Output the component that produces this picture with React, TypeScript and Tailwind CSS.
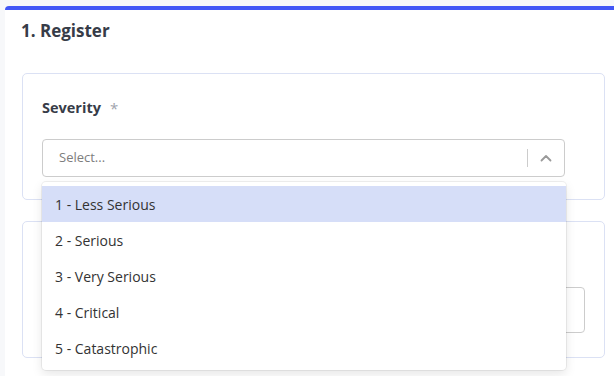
import React from "react";

const options = [
  "1 - Less Serious",
  "2 - Serious",
  "3 - Very Serious",
  "4 - Critical",
  "5 - Catastrophic",
];

export default function App() {
  return (
    <div
      className="h-screen bg-[#f7f8fa] pl-[5px] pt-[6px] overflow-hidden"
      style={{ fontFamily: '"Open Sans", "Noto Sans", sans-serif' }}
    >
      <div className="bg-white border-t-4 border-[#4257f6] rounded-tl-[4px] h-full">
        <div className="pl-[16px] pt-[8px]">
          <h2 className="text-[17px] leading-[26px] font-bold text-[#373c48]">1. Register</h2>
        </div>
        <div className="pl-[17px] pr-[9px] pt-[29px] flex flex-col gap-[21px]">
          <div className="relative z-10 h-[127px] border border-[#dbe1f4] rounded-[5px] px-[19px] pt-[24px]">
            <div className="flex items-center h-[20px]">
              <span className="text-[14.5px] font-bold text-[#373c48]">Severity</span>
              <span className="ml-[9px] text-[15px] text-[#a0a4ad]">*</span>
            </div>
            <div className="relative mt-[21px] w-[523px]">
              <div className="h-[38px] border border-[#cccccc] rounded-[4px] flex items-center bg-white">
                <span className="flex-1 pl-[16px] text-[13px] text-[#7d7d7d]">Select...</span>
                <span className="w-px h-[18px] bg-[#cccccc]" />
                <span className="w-[36px] flex items-center justify-center">
                  <svg width="12" height="8" viewBox="0 0 12 8" fill="none">
                    <path d="M1.5 6.5 L6 2 L10.5 6.5" stroke="#9a9a9a" strokeWidth="1.8" strokeLinecap="round" strokeLinejoin="round" />
                  </svg>
                </span>
              </div>
              <div className="absolute left-0 top-[43px] w-[524px] bg-white rounded-[4px] py-[4px] shadow-[0_0_0_1px_rgba(0,0,0,0.06),0_4px_11px_rgba(0,0,0,0.1)]">
                {options.map((o, i) => (
                  <div
                    key={o}
                    className={
                      "h-[36px] flex items-center pl-[13px] text-[14px] text-[#333333] " +
                      (i === 0 ? "bg-[#d6def8]" : "")
                    }
                  >
                    {o}
                  </div>
                ))}
              </div>
            </div>
          </div>
          <div className="h-[137px] border border-[#dbe1f4] rounded-[5px] px-[19px] pt-[65px]">
            <div className="h-[46px] border border-[#cccccc] rounded-[4px]" />
          </div>
        </div>
      </div>
    </div>
  );
}
